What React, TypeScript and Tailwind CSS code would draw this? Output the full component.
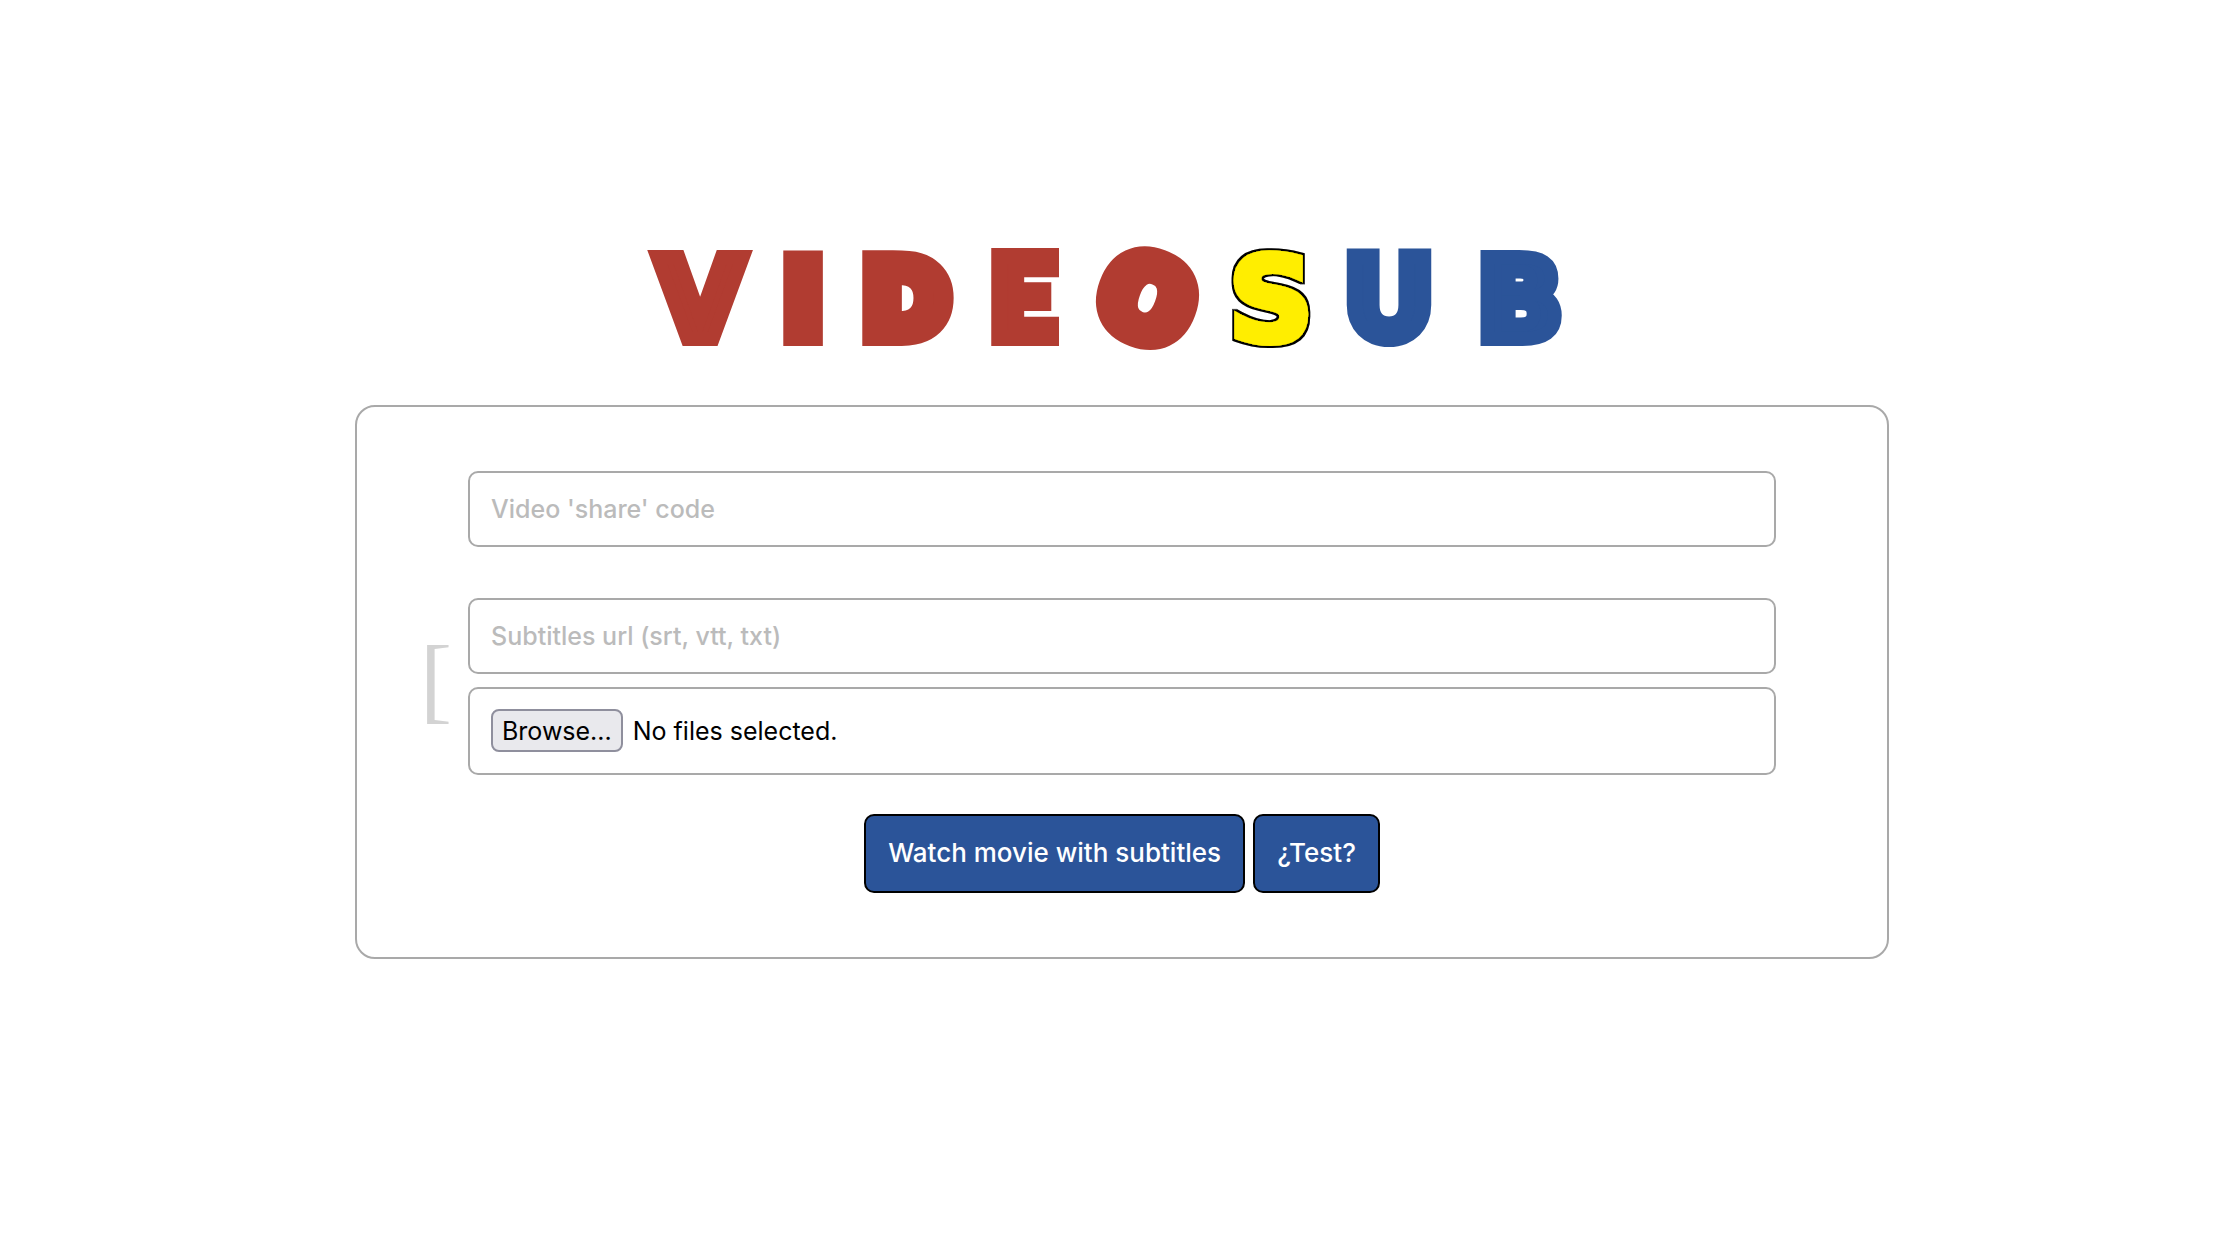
import { useRef, useState } from "react";

const FIELD =
  "w-full rounded-[10px] border-2 border-[#a9a9a9] bg-white px-[21px] outline-none";

const TEXT_INPUT =
  "h-[76px] text-[25px] font-medium placeholder:text-[#bbbbbb]";

const BUTTON =
  "h-[79px] cursor-pointer rounded-[10px] border-2 border-black bg-[#2b5499] px-[22px] text-[26px] font-medium leading-8 text-white";

const LATO = "Lato, sans-serif";
const DEJAVU = "'DejaVu Sans', sans-serif";

const RED = "#b13c31";
const YELLOW = "#ffee00";
const BLUE = "#2b5499";

function Logo() {
  return (
    <svg
      viewBox="0 0 964 115"
      className="w-full max-w-[964px] overflow-visible"
      fontFamily={DEJAVU}
      fontWeight={900}
      textAnchor="middle"
      role="img"
      aria-label="VideoSub"
    >
      <defs>
        <filter id="outline" x="-20%" y="-20%" width="140%" height="140%">
          <feMorphology in="SourceAlpha" operator="dilate" radius="2" />
          <feMerge>
            <feMergeNode />
            <feMergeNode in="SourceGraphic" />
          </feMerge>
        </filter>
      </defs>
      <text fill={RED} stroke={RED}>
        <tspan x="60" y="99" fontSize={112} strokeWidth={14}>V</tspan>
        <tspan x="163" y="96" fontSize={104} strokeWidth={20}>I</tspan>
        <tspan x="266" y="96" fontSize={104} strokeWidth={20}>D</tspan>
        <tspan x="383" y="98" fontSize={112} strokeWidth={16} fontFamily={LATO}>E</tspan>
        {/* tilted, so that the counter leans to the right */}
        <tspan x="497" y="79" fontSize={106} strokeWidth={22} rotate="20">O</tspan>
      </text>
      <text
        x="631"
        y="100"
        fontSize={116}
        strokeWidth={8}
        fill={YELLOW}
        stroke={YELLOW}
        filter="url(#outline)"
      >
        S
      </text>
      <text fill={BLUE} stroke={BLUE}>
        <tspan x="749" y="98" fontSize={112} strokeWidth={16} fontFamily={LATO}>U</tspan>
        <tspan x="880" y="99" fontSize={112} strokeWidth={14}>B</tspan>
      </text>
    </svg>
  );
}

function FilePicker() {
  const inputRef = useRef<HTMLInputElement>(null);
  const [names, setNames] = useState<string[]>([]);

  return (
    <div className={`${FIELD} flex h-[88px] items-center gap-[10px]`}>
      <input
        ref={inputRef}
        type="file"
        multiple
        aria-label="Subtitles file"
        className="hidden"
        onChange={e =>
          setNames(Array.from(e.target.files ?? []).map(f => f.name))
        }
      />
      <button
        type="button"
        onClick={() => inputRef.current?.click()}
        className="h-[43px] cursor-pointer rounded-lg border-2 border-[#8f8f9d] bg-[#e9e9ed] px-[9px] leading-8"
      >
        Browse...
      </button>
      <span>{names.length ? names.join(", ") : "No files selected."}</span>
    </div>
  );
}

export default function App() {
  const [code, setCode] = useState("");
  const [url, setUrl] = useState("");

  return (
    <main className="flex min-h-screen flex-col items-center justify-center gap-[50px] bg-white pb-[42px] pl-1 font-['Inter',sans-serif] text-[25px] leading-8 text-black">
      <h1 className="flex w-full justify-center">
        <Logo />
      </h1>

      <form
        onSubmit={e => e.preventDefault()}
        className="grid w-[1534px] max-w-full grid-cols-[111px_1fr_111px] rounded-[20px] border-2 border-[#a9a9a9] py-16"
      >
        <input
          type="text"
          aria-label="Video 'share' code"
          placeholder="Video 'share' code"
          value={code}
          onChange={e => setCode(e.target.value)}
          className={`${FIELD} ${TEXT_INPUT} col-start-2`}
        />

        {/* Either a url or a file */}
        <div
          aria-hidden="true"
          className="col-start-1 mt-[51px] flex items-center justify-end pr-4 pb-[14px] font-['Liberation_Serif',serif] text-[96px] leading-none text-[#d3d3d3]"
        >
          [
        </div>
        <div className="col-start-2 mt-[51px] flex flex-col gap-[13px]">
          <input
            type="text"
            aria-label="Subtitles url"
            placeholder="Subtitles url (srt, vtt, txt)"
            value={url}
            onChange={e => setUrl(e.target.value)}
            className={`${FIELD} ${TEXT_INPUT}`}
          />
          <FilePicker />
        </div>

        <div className="col-start-2 mt-[39px] flex justify-center gap-2">
          <button type="submit" className={BUTTON}>
            Watch movie with subtitles
          </button>
          <button type="button" className={BUTTON}>
            ¿Test?
          </button>
        </div>
      </form>
    </main>
  );
}
